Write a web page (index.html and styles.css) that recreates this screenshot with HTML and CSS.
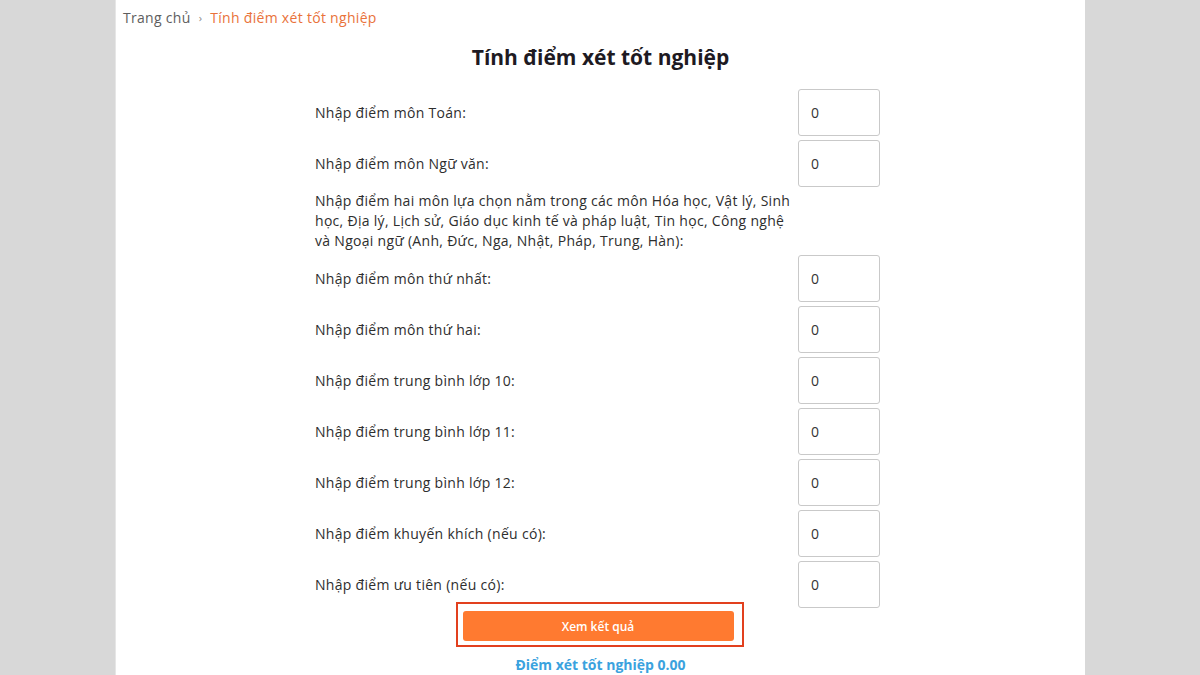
FILE: index.html
```html
<!DOCTYPE html>
<html lang="vi">
<head>
<meta charset="utf-8">
<title>Tính điểm xét tốt nghiệp</title>
<link rel="stylesheet" href="styles.css">
</head>
<body>
<div class="page">
  <nav class="crumbs">
    <span class="crumb-home">Trang chủ</span>
    <span class="crumb-sep">›</span>
    <span class="crumb-current">Tính điểm xét tốt nghiệp</span>
  </nav>
  <h1 class="title">Tính điểm xét tốt nghiệp</h1>
  <form class="calc">
    <div class="row"><label class="lbl">Nhập điểm môn Toán:</label><input class="num" type="text" value="0"></div>
    <div class="row"><label class="lbl">Nhập điểm môn Ngữ văn:</label><input class="num" type="text" value="0"></div>
    <p class="note">Nhập điểm hai môn lựa chọn nằm trong các môn Hóa học, Vật lý, Sinh học, Địa lý, Lịch sử, Giáo dục kinh tế và pháp luật, Tin học, Công nghệ và Ngoại ngữ (Anh, Đức, Nga, Nhật, Pháp, Trung, Hàn):</p>
    <div class="row"><label class="lbl">Nhập điểm môn thứ nhất:</label><input class="num" type="text" value="0"></div>
    <div class="row"><label class="lbl">Nhập điểm môn thứ hai:</label><input class="num" type="text" value="0"></div>
    <div class="row"><label class="lbl">Nhập điểm trung bình lớp 10:</label><input class="num" type="text" value="0"></div>
    <div class="row"><label class="lbl">Nhập điểm trung bình lớp 11:</label><input class="num" type="text" value="0"></div>
    <div class="row"><label class="lbl">Nhập điểm trung bình lớp 12:</label><input class="num" type="text" value="0"></div>
    <div class="row"><label class="lbl">Nhập điểm khuyến khích (nếu có):</label><input class="num" type="text" value="0"></div>
    <div class="row"><label class="lbl">Nhập điểm ưu tiên (nếu có):</label><input class="num" type="text" value="0"></div>
  </form>
  <div class="actions">
    <div class="highlight"><button class="btn" type="button">Xem kết quả</button></div>
  </div>
  <p class="result">Điểm xét tốt nghiệp 0.00</p>
</div>
</body>
</html>
```
FILE: styles.css
```css
html, body {
  margin: 0;
  padding: 0;
}
body {
  background: #d8d8d8;
  font-family: "Open Sans", "Noto Sans", sans-serif;
  color: #2a2a2a;
  height: 675px;
  overflow: hidden;
}
.page {
  width: 970px;
  margin: 0 auto;
  height: 675px;
  background: #ffffff;
  box-sizing: border-box;
  padding-top: 8px;
  border-left: 1px solid #e6e6e6;
}
.crumbs {
  padding-left: 7px;
  font-size: 14px;
  line-height: 20px;
  letter-spacing: 0.3px;
  color: #5e5e5e;
  display: flex;
  align-items: center;
  gap: 8px;
}
.crumb-sep {
  font-size: 11px;
  color: #888;
}
.crumb-current {
  color: #e9723a;
}
.title {
  margin: 15px 0 0;
  text-align: center;
  font-size: 21px;
  line-height: 28px;
  font-weight: 700;
  color: #1e1a22;
}
.calc {
  width: 565px;
  margin: 18px 0 0 199px;
  display: flex;
  flex-direction: column;
  gap: 4px;
}
.row {
  display: flex;
  align-items: center;
  justify-content: space-between;
  height: 47px;
}
.lbl {
  font-size: 14px;
  letter-spacing: 0.3px;
  color: #2e2e2e;
}
.num {
  width: 82px;
  height: 47px;
  box-sizing: border-box;
  border: 1px solid #c9c9c9;
  border-radius: 3px;
  padding: 0 12px;
  font-family: "Open Sans", sans-serif;
  font-size: 14px;
  color: #333;
  background: #fff;
}
.note {
  margin: 0;
  width: 480px;
  font-size: 14px;
  line-height: 20px;
  letter-spacing: 0.3px;
  color: #2e2e2e;
}
.actions {
  display: flex;
  justify-content: center;
  margin-top: -6px;
}
.highlight {
  border: 2px solid #e2401e;
  padding: 7px 8px 4px 5px;
  margin-left: -2px;
}
.btn {
  display: block;
  width: 271px;
  height: 30px;
  border: none;
  border-radius: 3px;
  background: #ff7a30;
  color: #fff;
  font-family: "Open Sans", sans-serif;
  font-size: 12px;
  font-weight: 600;
}
.result {
  margin: 8px 0 0;
  text-align: center;
  font-size: 14px;
  font-weight: 700;
  color: #3aa2de;
}
```
